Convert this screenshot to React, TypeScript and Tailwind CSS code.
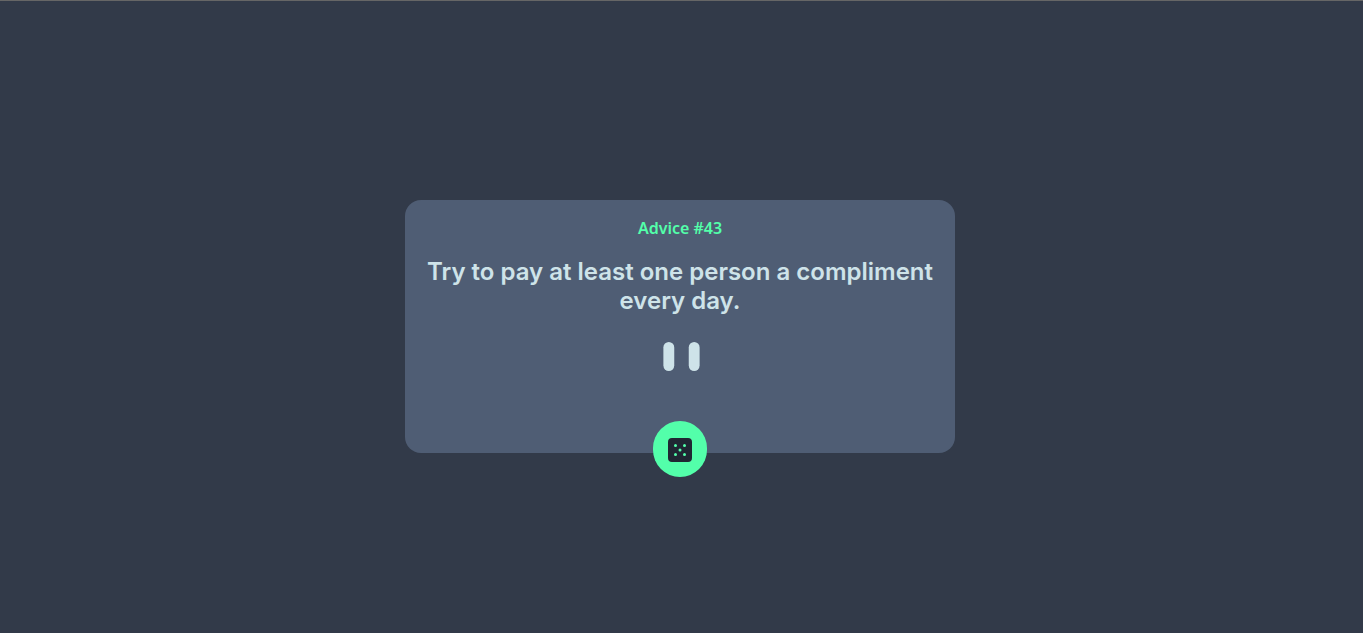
import React from "react";

function Divider() {
  return (
    <svg className="ml-[2px] h-[29px] w-[37px]" viewBox="0 0 20 16" fill="#cee3e9" aria-hidden="true">
      <rect width="6" height="16" rx="3" />
      <rect x="14" width="6" height="16" rx="3" />
    </svg>
  );
}

function Dice() {
  return (
    <svg className="mt-[2px] size-6" viewBox="0 0 24 24" aria-hidden="true">
      <path
        fill="#202733"
        d="M20 0H4a4.005 4.005 0 0 0-4 4v16a4.005 4.005 0 0 0 4 4h16a4.005 4.005 0 0 0 4-4V4a4.005 4.005 0 0 0-4-4ZM7.5 18a1.5 1.5 0 1 1 0-3 1.5 1.5 0 0 1 0 3Zm0-9a1.5 1.5 0 1 1 0-3 1.5 1.5 0 0 1 0 3Zm4.5 4.5a1.5 1.5 0 1 1 0-3 1.5 1.5 0 0 1 0 3Zm4.5 4.5a1.5 1.5 0 1 1 0-3 1.5 1.5 0 0 1 0 3Zm0-9a1.5 1.5 0 1 1 0-3 1.5 1.5 0 0 1 0 3Z"
      />
    </svg>
  );
}

export default function App() {
  return (
    <main className="flex min-h-screen items-center justify-center border-t border-[#666666] bg-[#323a49] pt-[19px] pr-[3px]">
      <section className="relative flex w-full max-w-[550px] flex-col items-center rounded-2xl bg-[#4f5d74] px-4 pt-4 pb-[82px] text-center">
        <h2 className="font-['Noto_Sans',sans-serif] text-base font-semibold text-[#53ffaa]">Advice #43</h2>
        <p className="mt-[17px] mb-[27px] font-['Inter',sans-serif] text-2xl leading-[29px] font-semibold text-[#cee3e9]">
          Try to pay at least one person a compliment every day.
        </p>
        <Divider />
        <button
          type="button"
          aria-label="New advice"
          className="absolute -bottom-6 left-1/2 flex h-14 w-[54px] -translate-x-1/2 items-center justify-center rounded-full bg-[#53ffaa]"
        >
          <Dice />
        </button>
      </section>
    </main>
  );
}
